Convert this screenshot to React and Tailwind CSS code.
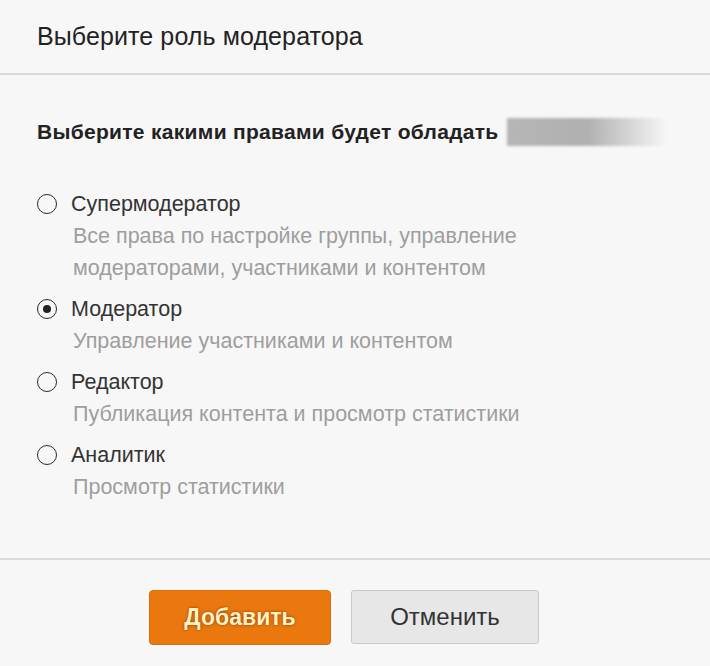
import React from 'react';

const roles = [
  { name: 'Супермодератор', desc: ['Все права по настройке группы, управление', 'модераторами, участниками и контентом'] },
  { name: 'Модератор', desc: ['Управление участниками и контентом'], checked: true },
  { name: 'Редактор', desc: ['Публикация контента и просмотр статистики'] },
  { name: 'Аналитик', desc: ['Просмотр статистики'] },
];

const Radio = ({ checked }) => (
  <span className="w-[20px] h-[20px] rounded-full border-[1.5px] border-[#2a2a2a] flex items-center justify-center shrink-0">
    {checked && <span className="w-[8px] h-[8px] rounded-full bg-[#222]"></span>}
  </span>
);

export default function App() {
  return (
    <div className="w-[710px] h-[666px] bg-[#f7f7f7] overflow-hidden" style={{ fontFamily: '"Liberation Sans", Arial, sans-serif' }}>
      {/* Header */}
      <div className="h-[75px] flex items-center pl-[37px] border-b-2 border-[#d9d9d9]">
        <h1 className="text-[25px] text-[#222] leading-none tracking-[0.1px]">Выберите роль модератора</h1>
      </div>

      {/* Body */}
      <div className="pl-[37px] pt-[43px] h-[485px] border-b-2 border-[#dcdcdc]">
        <div className="flex items-center h-[28px]">
          <span className="text-[21px] font-bold text-[#222] tracking-[0.3px]">Выберите какими правами будет обладать</span>
          <span className="ml-[8px] w-[160px] h-[28px] blur-[1.5px] bg-gradient-to-r from-[#b5b5b5] via-[#b0b0b0] to-[#f7f7f7]"></span>
        </div>

        <div className="mt-[42px] flex flex-col gap-[9px]">
          {roles.map((r) => (
            <div key={r.name}>
              <div className="flex items-center h-[32px]">
                <Radio checked={r.checked} />
                <span className="ml-[14px] text-[21.5px] text-[#333]">{r.name}</span>
              </div>
              <div className="pl-[36px]">
                {r.desc.map((d) => (
                  <div key={d} className="h-[32px] leading-[32px] text-[21.5px] text-[#9e9e9e]">{d}</div>
                ))}
              </div>
            </div>
          ))}
        </div>
      </div>

      {/* Footer */}
      <div className="flex gap-[20px] pl-[149px] pt-[30px]">
        <button className="w-[182px] h-[55px] rounded-[4px] bg-[#eb780e] border border-[#d96d08] text-[#fff1c4] text-[23px] font-bold [text-shadow:0_0_3px_rgba(120,50,0,0.9)]">
          Добавить
        </button>
        <button className="w-[188px] h-[54px] rounded-[3px] bg-[#e7e7e7] border border-[#c9c9c9] text-[#333] text-[24px]">
          Отменить
        </button>
      </div>
    </div>
  );
}
